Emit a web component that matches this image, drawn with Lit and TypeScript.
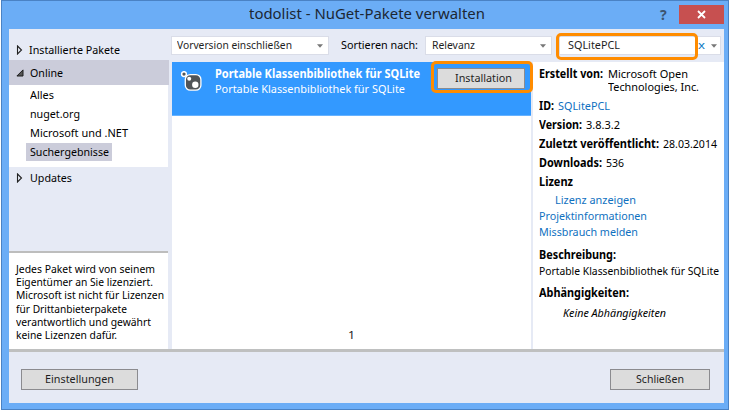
import { LitElement, html, css, svg } from "lit";
import { customElement, property, query } from "lit/decorators.js";

/** One line of text, condensed horizontally to the given advance width. */
@customElement("ui-text")
class UiText extends LitElement {
  @property({ type: Number }) w = 0;
  @query("span") private span!: HTMLSpanElement;

  static styles = css`
    :host { display: block; white-space: nowrap; flex: none; }
    span { display: inline-block; transform-origin: 0 50%; }
  `;

  render() {
    return html`<span><slot></slot></span>`;
  }

  updated() {
    this.style.width = this.w + "px";
    const natural = this.span.offsetWidth ? this.span.getBoundingClientRect().width : this.w;
    this.span.style.transform = `scaleX(${this.w / natural})`;
  }
}

const closedArrow = svg`<svg class="tri" width="6" height="10" viewBox="0 0 6 10"><path d="M1 1 L5 5 L1 9 Z" fill="none" stroke="#222" stroke-width="1.1"/></svg>`;
const openArrow = svg`<svg class="tri open" width="8" height="8" viewBox="0 0 8 8"><path d="M7 .9 V7 H.9 Z" fill="#555" stroke="#1e1e1e" stroke-width="1"/></svg>`;
const dropArrow = svg`<svg class="drop" width="6" height="4" viewBox="0 0 6 4"><path d="M0 .3 H6 L3 3.7 Z" fill="#777"/></svg>`;

@customElement("app-root")
class AppRoot extends LitElement {
  static styles = css`
    :host {
      display: block; width: 730px; height: 411px; background: #fff; overflow: hidden;
      font: 11.5px/16px "Noto Sans", "Open Sans", sans-serif; color: #000;
    }
    * { box-sizing: border-box; }
    svg { display: block; flex: none; }
    .window {
      position: relative; width: 728px; height: 410px; margin-left: 1px;
      border: 1px solid #4a82c4; background: #6badf6;
      padding: 0 4px 6px 7px; display: flex; flex-direction: column;
    }
    .title { height: 28px; flex: none; display: flex; align-items: flex-start; }
    .title .name { font-size: 15px; line-height: 25px; margin-left: 240px; color: #1c2733; }
    .help { font: bold 14px/26px "Noto Sans", sans-serif; color: #3c5470; margin-left: 175px; width: 9px; margin-top: 1px; }
    .close {
      margin-left: 10px; margin-top: 4px; width: 45px; height: 19px; background: #c75050;
      display: flex; align-items: center; justify-content: center;
    }
    .content { width: 715px; height: 374px; background: #e6eaf5; display: flex; flex-direction: column; }
    .body { height: 320px; display: flex; }
    .side { width: 160px; height: 320px; display: flex; flex-direction: column; flex: none; }
    .node { display: flex; align-items: center; padding-left: 7px; gap: 7px; flex: none; }
    .tri { width: 7px; padding: 0; }
    .tri.open { width: 8px; margin-right: -1px; }
    .first { height: 31px; padding-top: 11px; }
    .first ui-text { margin-left: -1px; }
    .online { height: 25px; background: #cbccda; }
    .updates { height: 22px; }
    .children {
      height: 82px; background: #fff; margin-right: 1px; padding: 0 0 0 17px;
      display: flex; flex-direction: column; align-items: flex-start;
    }
    .child { height: 19px; padding: 0 3px 0 4px; display: flex; align-items: center; }
    .child.on { background: #cbccda; height: 18px; margin-top: 1px; }
    .child.on ui-text { margin-top: -1px; }
    .note {
      margin-top: auto; height: 98px; background: #fff; border-top: 2px solid #bdbdbd;
      margin-right: 1px; padding: 9px 0 0 7px; line-height: 13.2px; font-size: 11.4px;
    }
    .right { width: 552px; margin-left: 3px; display: flex; flex-direction: column; }
    .bar { height: 33px; padding-top: 7px; margin-left: -1px; display: flex; align-items: flex-start; }
    .box {
      height: 19px; background: #fff; border: 1px solid #dadde8; display: flex;
      align-items: center; color: #1e1e1e; padding-right: 5px;
    }
    .box ui-text { margin-top: -1px; }
    .box .drop { margin-left: auto; }
    .pre { width: 158px; padding-left: 5px; }
    .sort { margin: 1px 0 0 12px; }
    .rel { width: 127px; margin-left: 7px; padding-left: 6px; }
    .search { width: 162px; margin-left: 7px; padding-left: 8px; padding-right: 3px; }
    .search .x { color: #0e7ac4; margin-left: 78px; }
    .columns { display: flex; height: 287px; }
    .list { width: 359px; background: #fff; display: flex; flex-direction: column; }
    .item { height: 54px; background: #3399ff; color: #fff; display: flex; border-bottom: 1px solid #66b2ff; flex: none; }
    .item svg { margin: 9px 0 0 8px; }
    .label { margin: 4px 0 0 13px; line-height: 15px; }
    .b { font-weight: 700; }
    .page { margin: auto 0 6px 176px; color: #222; }
    .btn {
      background: #dcdcdc; border: 1.5px solid #8b8b8f; height: 21px; color: #1e1e1e;
      display: flex; align-items: center; justify-content: center; flex: none;
    }
    .btn ui-text { margin-top: -2px; }
    .install { width: 88px; margin: 6px 0 0 17px; padding-left: 5px; }
    .details { width: 191px; margin-left: 2px; background: #fff; padding: 4px 0 0 6px; }
    .row { display: flex; height: 19px; gap: 4px; }
    .author { height: 32px; }
    .names { padding: 1px 0 0 1px; line-height: 13px; }
    .link { color: #0e70c0; }
    .footer {
      height: 54px; border-top: 3px solid #bfc0c0; padding: 17px 14px 0 12px;
      display: flex; justify-content: space-between;
    }
    .settings { width: 117px; }
    .done { width: 100px; }
    .ring { position: absolute; border: 3px solid #ff8c00; border-radius: 5px; pointer-events: none; }
    .ring.a { left: 554px; top: 32px; width: 142px; height: 27px; }
    .ring.b2 { left: 429px; top: 60px; width: 102px; height: 32px; }
    .in1 { margin-left: 16px; margin-top: -1px; height: 16px; }
    .l16 { height: 16px; }
    .desc { margin-top: 7px; height: 16px; }
    .deps { margin-top: 6px; height: 20px; }
    .none { margin-left: 24px; font-style: italic; }
  `;

  render() {
    return html`
      <div class="window">
        <div class="title">
          <ui-text class="name" w="236">todolist - NuGet-Pakete verwalten</ui-text>
          <div class="help">?</div>
          <div class="close">
            <svg width="9" height="9" viewBox="0 0 9 9"><path d="M1 1 L8 8 M8 1 L1 8" stroke="#fff" stroke-width="1.8"/></svg>
          </div>
        </div>
        <div class="content">
          <div class="body">
            <div class="side">
              <div class="node first">${closedArrow}<ui-text w="91">Installierte Pakete</ui-text></div>
              <div class="node online">${openArrow}<ui-text w="33">Online</ui-text></div>
              <div class="children">
                <div class="child"><ui-text w="24">Alles</ui-text></div>
                <div class="child"><ui-text w="50">nuget.org</ui-text></div>
                <div class="child"><ui-text w="98">Microsoft und .NET</ui-text></div>
                <div class="child on"><ui-text w="79">Suchergebnisse</ui-text></div>
              </div>
              <div class="node updates">${closedArrow}<ui-text w="42">Updates</ui-text></div>
              <div class="note">
                <ui-text w="139">Jedes Paket wird von seinem</ui-text>
                <ui-text w="137">Eigentümer an Sie lizenziert.</ui-text>
                <ui-text w="148">Microsoft ist nicht für Lizenzen</ui-text>
                <ui-text w="111">für Drittanbieterpakete</ui-text>
                <ui-text w="135">verantwortlich und gewährt</ui-text>
                <ui-text w="101">keine Lizenzen dafür.</ui-text>
              </div>
            </div>
            <div class="right">
              <div class="bar">
                <div class="box pre"><ui-text w="115">Vorversion einschließen</ui-text>${dropArrow}</div>
                <ui-text class="sort" w="77">Sortieren nach:</ui-text>
                <div class="box rel"><ui-text w="43">Relevanz</ui-text>${dropArrow}</div>
                <div class="box search"><ui-text w="52">SQLitePCL</ui-text><ui-text class="x" w="7">x</ui-text>${dropArrow}</div>
              </div>
              <div class="columns">
                <div class="list">
                  <div class="item">
                    <svg width="22" height="22" viewBox="0 0 22 22">
                      <rect x="5.3" y="3.6" width="15.6" height="15.6" rx="5" fill="#505458" stroke="#fff" stroke-width="1.3"/>
                      <circle cx="4" cy="3.1" r="2.4" fill="#505458" stroke="#fff" stroke-width="1.5"/>
                      <circle cx="9.2" cy="7.8" r="2" fill="#fff"/>
                      <circle cx="15.3" cy="13.8" r="3.2" fill="#fff"/>
                    </svg>
                    <div class="label">
                      <ui-text class="b" w="205">Portable Klassenbibliothek für SQLite</ui-text>
                      <ui-text w="190">Portable Klassenbibliothek für SQLite</ui-text>
                    </div>
                    <div class="btn install"><ui-text w="57">Installation</ui-text></div>
                  </div>
                  <ui-text class="page" w="7">1</ui-text>
                </div>
                <div class="details">
                  <div class="row author">
                    <ui-text class="b" w="64">Erstellt von:</ui-text>
                    <div class="names">
                      <ui-text w="80">Microsoft Open</ui-text>
                      <ui-text w="91">Technologies, Inc.</ui-text>
                    </div>
                  </div>
                  <div class="row"><ui-text class="b" w="15">ID:</ui-text><ui-text class="link" w="52">SQLitePCL</ui-text></div>
                  <div class="row"><ui-text class="b" w="43">Version:</ui-text><ui-text w="34">3.8.3.2</ui-text></div>
                  <div class="row"><ui-text class="b" w="120">Zuletzt veröffentlicht:</ui-text><ui-text w="54">28.03.2014</ui-text></div>
                  <div class="row"><ui-text class="b" w="63">Downloads:</ui-text><ui-text w="18">536</ui-text></div>
                  <div class="row"><ui-text class="b" w="34">Lizenz</ui-text></div>
                  <ui-text class="link in1" w="81">Lizenz anzeigen</ui-text>
                  <ui-text class="link l16" w="108">Projektinformationen</ui-text>
                  <ui-text class="link l16" w="99">Missbrauch melden</ui-text>
                  <ui-text class="b desc" w="77">Beschreibung:</ui-text>
                  <ui-text class="l16" w="180">Portable Klassenbibliothek für SQLite</ui-text>
                  <ui-text class="b deps" w="90">Abhängigkeiten:</ui-text>
                  <ui-text class="none" w="103">Keine Abhängigkeiten</ui-text>
                </div>
              </div>
            </div>
          </div>
          <div class="footer">
            <div class="btn settings"><ui-text w="69">Einstellungen</ui-text></div>
            <div class="btn done"><ui-text w="48">Schließen</ui-text></div>
          </div>
        </div>
        <div class="ring a"></div>
        <div class="ring b2"></div>
      </div>
    `;
  }
}
